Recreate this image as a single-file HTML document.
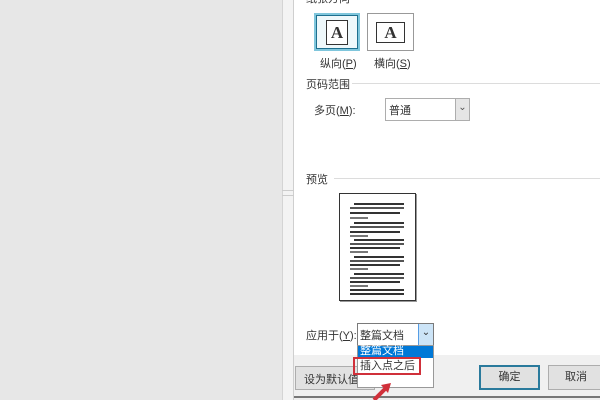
<!DOCTYPE html>
<html><head><meta charset="utf-8"><style>
*{margin:0;padding:0;box-sizing:border-box}
body{width:600px;height:400px;overflow:hidden;background:#e7e7e7;position:relative;font-family:"Liberation Sans","Noto Sans CJK SC",sans-serif;font-size:11px;color:#333}
.a{position:absolute}
.t{position:absolute;white-space:nowrap;font-size:11px}
.line{position:absolute;height:1px;background:#dcdcdc}
.pl{position:absolute;height:2px;background:#333}
</style></head><body>
<div class="a" style="left:282px;top:0;width:12px;height:400px;background:#f3f3f3;border-left:1px solid #d4d4d4;border-right:1px solid #cfcfcf"></div>
<div class="a" style="left:282px;top:190px;width:12px;height:6px;border-top:1px solid #ccc;border-bottom:1px solid #ccc"></div>
<div class="a" style="left:294px;top:0;width:306px;height:355px;background:#fff"></div>
<div class="a" style="left:294px;top:355px;width:306px;height:42px;background:#f0f0f0"></div>
<div class="a" style="left:294px;top:396px;width:306px;height:2px;background:#777"></div>
<div class="a" style="left:294px;top:398px;width:306px;height:2px;background:#eee"></div>

<div class="t" style="left:306px;top:-10px;color:#333">纸张方向</div>
<div class="a" style="left:314px;top:13px;width:46px;height:38px;border:2px solid #7fc6dc;background:#eef8fb"></div>
<div class="a" style="left:316px;top:15px;width:42px;height:34px;border:1px solid #1e6f8e"></div>
<div class="a" style="left:326px;top:20px;width:22px;height:25px;background:#fff;border:1px solid #333;font:bold 17px 'Liberation Serif',serif;text-align:center;line-height:24px">A</div>
<div class="a" style="left:367px;top:13px;width:47px;height:38px;border:1px solid #999;background:#fff"></div>
<div class="a" style="left:376px;top:22px;width:29px;height:21px;background:#fff;border:1px solid #333;font:bold 17px 'Liberation Serif',serif;text-align:center;line-height:20px">A</div>
<div class="t" style="left:320px;top:55px">纵向(<u>P</u>)</div>
<div class="t" style="left:374px;top:55px">横向(<u>S</u>)</div>

<div class="t" style="left:306px;top:76px">页码范围</div>
<div class="line" style="left:352px;top:83px;width:248px"></div>
<div class="t" style="left:314px;top:102px">多页(<u>M</u>):</div>
<div class="a" style="left:385px;top:98px;width:85px;height:23px;border:1px solid #adadad;background:#fff"></div>
<div class="a" style="left:455px;top:99px;width:14px;height:21px;background:#e5e5e5;border-left:1px solid #adadad;text-align:center;font-size:10px;color:#555;line-height:18px">⌄</div>
<div class="t" style="left:389px;top:102px">普通</div>

<div class="t" style="left:306px;top:171px">预览</div>
<div class="line" style="left:334px;top:178px;width:266px"></div>
<div class="a" style="left:339px;top:193px;width:77px;height:108px;border:1px solid #333;background:#fff;box-shadow:1px 1px 0 #999"></div>
<div class="a" style="left:350px;top:203px;width:55px">
<div class="pl" style="left:4px;top:0;width:50px"></div><div class="pl" style="left:0;top:4px;width:54px;background:#555"></div><div class="pl" style="left:0;top:9px;width:50px"></div><div class="pl" style="left:0;top:14px;width:18px;background:#777"></div>
<div class="pl" style="left:4px;top:19px;width:50px"></div><div class="pl" style="left:0;top:23px;width:54px;background:#555"></div><div class="pl" style="left:0;top:28px;width:50px"></div><div class="pl" style="left:0;top:32px;width:18px;background:#777"></div>
<div class="pl" style="left:4px;top:36px;width:50px"></div><div class="pl" style="left:0;top:40px;width:54px;background:#555"></div><div class="pl" style="left:0;top:44px;width:50px"></div><div class="pl" style="left:0;top:48px;width:18px;background:#777"></div>
<div class="pl" style="left:4px;top:53px;width:50px"></div><div class="pl" style="left:0;top:57px;width:54px;background:#555"></div><div class="pl" style="left:0;top:61px;width:50px"></div><div class="pl" style="left:0;top:65px;width:18px;background:#777"></div>
<div class="pl" style="left:4px;top:70px;width:50px"></div><div class="pl" style="left:0;top:74px;width:54px;background:#555"></div><div class="pl" style="left:0;top:78px;width:50px"></div><div class="pl" style="left:0;top:82px;width:18px;background:#777"></div>
<div class="pl" style="left:0;top:86px;width:54px"></div><div class="pl" style="left:0;top:90px;width:54px"></div>
</div>

<div class="t" style="left:306px;top:327px">应用于(<u>Y</u>):</div>
<div class="a" style="left:357px;top:323px;width:77px;height:23px;border:1px solid #7a7a7a;background:#fff"></div>
<div class="a" style="left:418px;top:324px;width:15px;height:21px;background:#cce4f7;border-left:1px solid #569de5;text-align:center;font-size:10px;line-height:18px;color:#333">⌄</div>
<div class="t" style="left:360px;top:327px">整篇文档</div>
<div class="a" style="left:295px;top:366px;width:80px;height:24px;border:1px solid #adadad;background:#e1e1e1"></div>
<div class="t" style="left:304px;top:371px">设为默认值(</div>
<div class="a" style="left:357px;top:345px;width:77px;height:43px;border:1px solid #999;background:#fff"></div>
<div class="a" style="left:358px;top:346px;width:75px;height:12px;background:#0078d7"></div>
<div class="t" style="left:360px;top:345px;color:#fff;line-height:13px">整篇文档</div>
<div class="t" style="left:360px;top:360px;line-height:13px">插入点之后</div>
<div class="a" style="left:353px;top:357px;width:68px;height:18px;border:2px solid #d0303a"></div>

<div class="a" style="left:479px;top:365px;width:61px;height:25px;border:2px solid #2a7a9c;background:#e1e1e1;text-align:center;line-height:21px">确定</div>
<div class="a" style="left:548px;top:365px;width:56px;height:25px;border:1px solid #adadad;background:#e1e1e1;text-align:center;line-height:23px">取消</div>
<svg class="a" style="left:370px;top:380px" width="30" height="20"><path d="M4 20 L16 8" stroke="#d0303a" stroke-width="4"/><path d="M11 5 L21 3 L18 13 Z" fill="#d0303a"/></svg>
</body></html>
